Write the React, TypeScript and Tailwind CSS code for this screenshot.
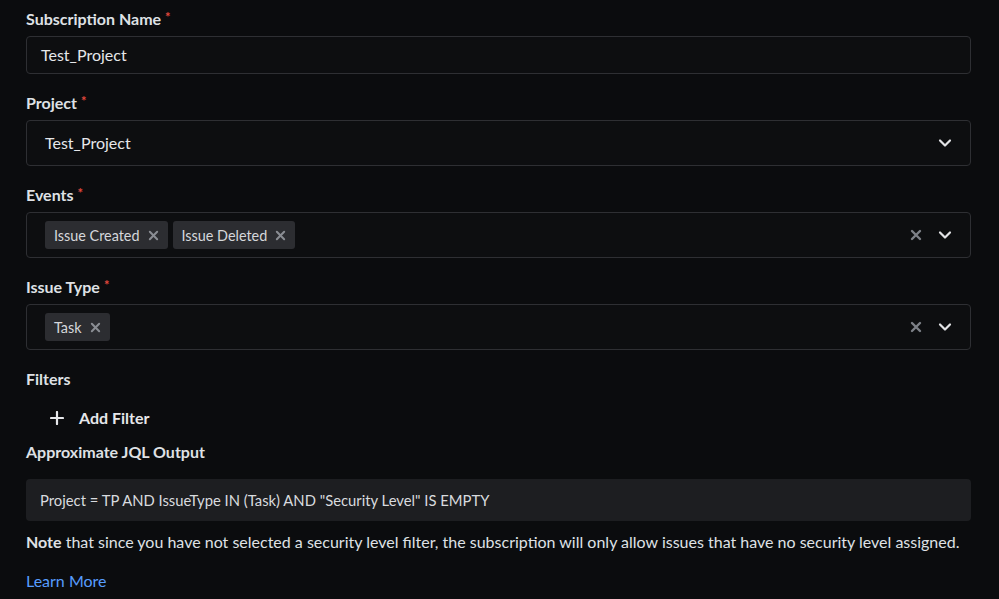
import React from "react";

const Chevron = () => (
  <svg width="14" height="14" viewBox="0 0 14 14" fill="none">
    <path d="M2 4.5 L7 9.5 L12 4.5" stroke="#e2e3e6" strokeWidth="2.2" strokeLinecap="round" strokeLinejoin="round" />
  </svg>
);

const XIcon = ({ size = 12, color = "#8a8d93", w = 2.4 }: { size?: number; color?: string; w?: number }) => (
  <svg width={size} height={size} viewBox="0 0 12 12" fill="none">
    <path d="M2 2 L10 10 M10 2 L2 10" stroke={color} strokeWidth={w} strokeLinecap="round" />
  </svg>
);

const Label = ({ text, required = true }: { text: string; required?: boolean }) => (
  <div className="h-5 leading-5 text-[16px] font-bold text-[#dfe1e5]">
    {text}
    {required && <span className="text-[#e2483d] ml-[4px] text-[13px] relative -top-[3px]">*</span>}
  </div>
);

const Tag = ({ text }: { text: string }) => (
  <div className="flex items-center h-7 rounded-[3px] bg-[#2c2d31] pl-[9px] pr-[9px] gap-[8px]">
    <span className="text-[14.4px] text-[#d5d7db] relative top-[1px]">{text}</span>
    <XIcon size={11} color="#8a8d93" w={2.2} />
  </div>
);

export default function App() {
  return (
    <div
      className="w-[999px] h-[599px] overflow-hidden bg-[#0b0c0e] text-[#dfe1e5] px-[26px] pt-[9px]"
      style={{ fontFamily: "Lato, 'Open Sans', sans-serif" }}
    >
      <div className="w-[945px]">
        <Label text="Subscription Name" />
        <div className="mt-[7px] h-[38px] rounded-[4px] border border-[#2e2f33] bg-[#0d0e10] flex items-center pl-[14px] text-[16px] text-[#e6e7ea]">
          Test_Project
        </div>

        <div className="mt-[19px]">
          <Label text="Project" />
        </div>
        <div className="mt-[7px] h-[46px] rounded-[4px] border border-[#2e2f33] bg-[#0d0e10] flex items-center pl-[18px] pr-[18px] text-[16px] text-[#e6e7ea]">
          <span className="flex-1">Test_Project</span>
          <Chevron />
        </div>

        <div className="mt-[19px]">
          <Label text="Events" />
        </div>
        <div className="mt-[7px] h-[46px] rounded-[4px] border border-[#2e2f33] bg-[#0d0e10] flex items-center pl-[18px] pr-[18px]">
          <div className="flex-1 flex gap-[5px]">
            <Tag text="Issue Created" />
            <Tag text="Issue Deleted" />
          </div>
          <div className="flex items-center gap-[16px]">
            <XIcon size={12} color="#7d8087" w={2.4} />
            <Chevron />
          </div>
        </div>

        <div className="mt-[19px]">
          <Label text="Issue Type" />
        </div>
        <div className="mt-[7px] h-[46px] rounded-[4px] border border-[#2e2f33] bg-[#0d0e10] flex items-center pl-[18px] pr-[18px]">
          <div className="flex-1 flex gap-[5px]">
            <Tag text="Task" />
          </div>
          <div className="flex items-center gap-[16px]">
            <XIcon size={12} color="#7d8087" w={2.4} />
            <Chevron />
          </div>
        </div>

        <div className="mt-[19px]">
          <Label text="Filters" required={false} />
        </div>
        <div className="mt-[13px] h-[32px] flex items-center pl-[24px] gap-[15px]">
          <svg width="14" height="14" viewBox="0 0 14 14" fill="none">
            <path d="M7 1 V13 M1 7 H13" stroke="#e6e7ea" strokeWidth="2.2" strokeLinecap="round" />
          </svg>
          <span className="text-[16px] font-bold text-[#e6e7ea]">Add Filter</span>
        </div>

        <div className="mt-[8px]">
          <Label text="Approximate JQL Output" required={false} />
        </div>
        <div className="mt-[17px] h-[42px] rounded-[4px] bg-[#1d1e21] flex items-center pl-[14px] text-[14.8px] text-[#d9dbdf]">
          Project = TP AND IssueType IN (Task) AND "Security Level" IS EMPTY
        </div>

        <div className="mt-[11px] h-5 leading-5 text-[16px] text-[#dfe1e5] whitespace-nowrap">
          <span className="font-bold">Note</span> that since you have not selected a security level filter, the subscription will only allow issues that have no security level assigned.
        </div>

        <div className="mt-[19px] h-5 leading-5 text-[16px] text-[#579dff]">Learn More</div>
      </div>
    </div>
  );
}
